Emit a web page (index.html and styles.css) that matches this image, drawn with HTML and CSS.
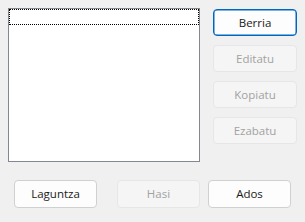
FILE: index.html
```html
<!DOCTYPE html>
<html>
<head>
<meta charset="utf-8">
<link rel="stylesheet" href="styles.css">
</head>
<body>
<div class="dialog">
  <div class="top">
    <div class="list">
      <div class="item focus"></div>
    </div>
    <div class="side">
      <button class="btn default">Berria</button>
      <button class="btn" disabled>Editatu</button>
      <button class="btn" disabled>Kopiatu</button>
      <button class="btn" disabled>Ezabatu</button>
    </div>
  </div>
  <div class="bottom">
    <button class="btn">Laguntza</button>
    <button class="btn hasi" disabled>Hasi</button>
    <button class="btn">Ados</button>
  </div>
</div>
</body>
</html>
```
FILE: styles.css
```css
html, body {
  margin: 0;
  padding: 0;
  background: #f0f0f0;
  width: 305px;
  height: 222px;
  overflow: hidden;
  font-family: "Open Sans", "Noto Sans", sans-serif;
  font-size: 11.5px;
}
.dialog {
  padding: 8px 0 0 8px;
}
.top {
  display: flex;
  align-items: flex-start;
}
.list {
  box-sizing: border-box;
  width: 192px;
  height: 154px;
  background: #ffffff;
  border: 1px solid #828790;
  padding: 0;
}
.item {
  height: 16px;
  box-sizing: border-box;
}
.item.focus {
  border: 1px dotted #000000;
}
.side {
  display: flex;
  flex-direction: column;
  gap: 9px;
  margin-left: 13px;
  padding-top: 1px;
}
.btn {
  box-sizing: border-box;
  width: 84px;
  height: 27px;
  background: #fdfdfd;
  border: 1px solid #d0d0d0;
  border-radius: 4px;
  font-family: inherit;
  font-size: inherit;
  color: #1a1a1a;
  padding: 0;
  line-height: 1;
}
.btn:disabled {
  background: #f5f5f5;
  border-color: #e6e6e6;
  color: #a2a2a2;
}
.btn.default {
  border: 1px solid #0067c0;
  box-shadow: inset 0 0 0 0.5px #0067c0;
}
.bottom {
  display: flex;
  margin-top: 18px;
  padding-left: 6px;
}
.bottom .btn {
  width: 83px;
  height: 28px;
}
.bottom .hasi {
  margin-left: 20px;
  margin-right: 8px;
}
```
